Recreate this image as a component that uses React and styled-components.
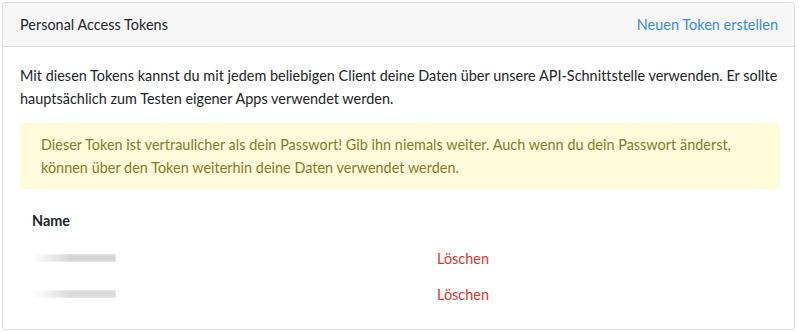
import React from 'react';
import styled, { createGlobalStyle } from 'styled-components';

const GlobalStyle = createGlobalStyle`
  * {
    box-sizing: border-box;
  }

  body {
    margin: 0;
    padding: 2px;
    background: #fff;
    font-family: Lato, 'Open Sans', sans-serif;
    font-size: 14.4px;
    line-height: 1.6;
    letter-spacing: 0.03px;
    color: #212529;
  }
`;

const tokens = [
  { id: 1, fade: 0.55 },
  { id: 2, fade: 0.45 },
];

function App() {
  return (
    <>
      <GlobalStyle />
      <Card>
        <CardHeader>
          <Title>Personal Access Tokens</Title>
          <HeaderLink href="#">Neuen Token erstellen</HeaderLink>
        </CardHeader>
        <CardBody>
          <Intro>
            Mit diesen Tokens kannst du mit jedem beliebigen Client deine Daten
            über unsere API-Schnittstelle verwenden. Er sollte hauptsächlich
            zum Testen eigener Apps verwendet werden.
          </Intro>
          <Alert>
            Dieser Token ist vertraulicher als dein Passwort! Gib ihn niemals
            weiter. Auch wenn du dein Passwort änderst, können über den Token
            weiterhin deine Daten verwendet werden.
          </Alert>
          <Table>
            <thead>
              <tr>
                <HeadCell>Name</HeadCell>
                <HeadCell />
              </tr>
            </thead>
            <tbody>
              {tokens.map(token => (
                <tr key={token.id}>
                  <Cell>
                    <BlurredName fade={token.fade} />
                  </Cell>
                  <Cell>
                    <DeleteLink href="#">Löschen</DeleteLink>
                  </Cell>
                </tr>
              ))}
            </tbody>
          </Table>
        </CardBody>
      </Card>
    </>
  );
}

const Card = styled.div`
  display: flex;
  flex-direction: column;
  width: 793px;
  border: 1px solid rgba(0, 0, 0, 0.125);
  border-radius: 4px;
  background: #fff;
`;

const CardHeader = styled.div`
  display: flex;
  justify-content: space-between;
  align-items: center;
  height: 44px;
  padding: 0 16px 0 17px;
  background: #f7f7f7;
  border-bottom: 1px solid rgba(0, 0, 0, 0.125);
  border-radius: 4px 4px 0 0;
`;

const Title = styled.span`
  color: #212529;
`;

const HeaderLink = styled.a`
  color: #3490dc;
  text-decoration: none;
`;

const CardBody = styled.div`
  padding: 17px 15px 17px 17px;
`;

const Intro = styled.p`
  margin: 0 0 13px;
`;

const Alert = styled.div`
  padding: 9px 20px;
  margin-bottom: 14px;
  background: #fffbdb;
  border: 1px solid #fffacc;
  border-radius: 4px;
  color: #857b26;
`;

const Table = styled.table`
  width: 100%;
  border-collapse: collapse;
`;

const HeadCell = styled.th`
  padding: 6px 12px 8px;
  text-align: left;
  font-weight: 700;

  &:first-child {
    width: 405px;
  }
`;

const Cell = styled.td`
  padding: 6.5px 12px;
  vertical-align: middle;
`;

const BlurredName = styled.span`
  display: block;
  width: 83px;
  height: 8px;
  margin-left: 1px;
  background: repeating-linear-gradient(
    90deg,
    rgba(110, 110, 110, ${props => props.fade}) 0 1.5px,
    rgba(200, 200, 200, 0.4) 1.5px 3px
  );
  -webkit-mask-image: linear-gradient(90deg, transparent, #000 45%);
  mask-image: linear-gradient(90deg, transparent, #000 45%);
  filter: blur(0.9px);
`;

const DeleteLink = styled.a`
  color: #e3342f;
  text-decoration: none;
`;

export default App;
